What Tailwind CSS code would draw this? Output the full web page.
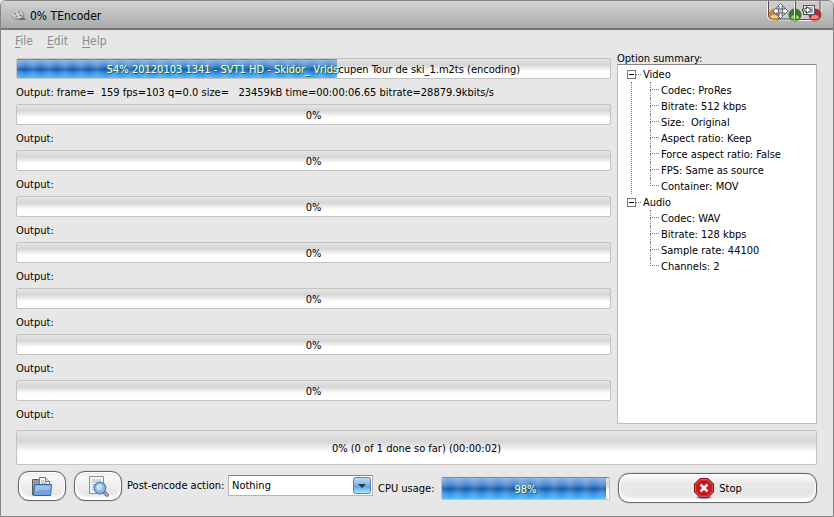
<!DOCTYPE html>
<html lang="en">
<head>
<meta charset="utf-8">
<meta name="viewport" content="width=device-width, initial-scale=1">
<title>0% TEncoder</title>
<script src="https://cdn.jsdelivr.net/npm/@tailwindcss/browser@4"></script>
</head>
<body class="bg-[#e7e7e7] font-['DejaVu_Sans_Condensed','DejaVu_Sans',sans-serif] text-[11px] leading-4 text-black">
<div class="flex min-h-screen flex-col rounded-t-md border border-[#858585] bg-[#e7e7e7]">
  <header class="flex h-[29px] items-start justify-between rounded-t-md border-b-2 border-[#777] bg-linear-to-b from-[#d2d2d2] to-[#aaaaaa] pr-[10px] pl-[10px]">
    <div class="flex items-center gap-[3px] pt-[7px]">
      <svg class="h-4 w-4" viewBox="0 0 16 16"><ellipse cx="7" cy="7" rx="6.500" ry="5" fill="#8b8e8a"/><ellipse cx="6.500" cy="6.300" rx="5.500" ry="4" fill="#d2d5d0"/><g fill="#858884"><ellipse cx="4" cy="5.500" rx="1.400" ry=".9"/><ellipse cx="8" cy="4.300" rx="1.500" ry=".9"/><ellipse cx="9.500" cy="7.300" rx="1.500" ry="1"/><ellipse cx="5.500" cy="8.300" rx="1.400" ry=".9"/></g><path d="M8 11l5-2 2 3H8z" fill="#737570"/></svg>
      <h1 class="text-[12px]">0% TEncoder</h1>
    </div>
    <div class="flex h-[22px]">
      <button aria-label="Move window" class="h-[22px] w-7"><svg viewBox="0 0 28 22" class="h-[22px] w-7">
        <path d="M.5 0v15q0 4 4 4H28" fill="#cfcbc8" stroke="#f6eeee"/><circle cx="8" cy="14" r="6.500" fill="#c48a45"/><ellipse cx="7" cy="17" rx="4" ry="3" fill="#ffd16c"/><circle cx="28" cy="14" r="6.500" fill="#3c7829"/><ellipse cx="28" cy="17" rx="4" ry="3" fill="#8ad65f"/>
        <path d="M1.500 0v14q0 4 4 4H28" fill="none" stroke="#5a5050"/><path d="M13.500 2.500l3 3h-1.500v2.500h2.500V6.500l3.500 3.500-3.500 3.500V12H15v2.500h1.500l-3 3-3-3H12V12H9.500v1.500L6 10l3.500-3.500V8H12V5.500h-1.500z" fill="#f6f4f6" stroke="#666678"/><path d="M11.500 8h4v4h-4z" fill="#ccc6c2" stroke="#666678"/><path d="M27.500 0v18" stroke="#eee"/></svg></button>
      <button aria-label="Roll up window" class="h-[22px] w-7"><svg viewBox="0 0 28 22" class="h-[22px] w-7">
        <path d="M0 19.500h22q4 0 4-4V0H0" fill="#cfc8c8" stroke="#f6eeee"/><circle cx="0" cy="14" r="6.500" fill="#3c7829"/><ellipse cx="0" cy="17" rx="4" ry="3" fill="#8ad65f"/><circle cx="20" cy="14" r="6.500" fill="#b52c31"/><ellipse cx="20" cy="17" rx="4" ry="3" fill="#f58585"/>
        <path d="M0 18.500h21q4 0 4-4V0" fill="none" stroke="#5a5050"/><path d="M9.500 5.500h9v7h-9z" fill="none" stroke="#555568" stroke-width="3"/><path d="M9.500 5.500h9v7h-9z" fill="#aaa" stroke="#fff"/><path d="M7.500 8h4V5.500l4.500 3.500-4.500 3.500V10h-4z" fill="#fff" stroke="#444450"/><path d="M.5 0v18" stroke="#555544"/></svg></button>
    </div>
  </header>

  <nav class="flex h-[22px] items-center gap-[14px] pl-[14px] text-[12px] text-[#8c8c8c]">
    <button><u class="underline-offset-2">F</u>ile</button>
    <button><u class="underline-offset-2">E</u>dit</button>
    <button><u class="underline-offset-2">H</u>elp</button>
  </nav>

  <main class="flex flex-col pr-4 pl-[15px]">
    <div class="flex gap-[6px]">
      <section class="min-w-0 flex-1 pt-[6px]" aria-label="Jobs">
        <div role="progressbar" aria-valuenow="54" class="relative h-[21px] rounded-xs border border-[#c3c3c3] bg-linear-to-b from-[#e6e6e6] via-[#d6d6d6] via-30% to-white to-65%">
          <div class="absolute inset-y-0 left-0 border-t border-[#6e8fb5] bg-[repeating-linear-gradient(90deg,#ffffff28_0px,#ffffff00_8px,#ffffff28_16px),linear-gradient(#86b1df,#4d8bd0_30%,#1557a9_52%,#2f8ce0_72%,#48b8ff)]" style="width:54%"></div>
          <p class="relative pt-[3px] text-center whitespace-pre"><span class="text-white [text-shadow:1px_1px_0_#107a20]">54% 20120103 1341 - SVT1 HD - Skidor_ Vrlds</span>cupen Tour de ski_1.m2ts (encoding)</p>
        </div>
        <p class="h-[25px] pt-[6px] whitespace-pre">Output: frame=  159 fps=103 q=0.0 size=   23459kB time=00:00:06.65 bitrate=28879.9kbits/s</p>
        <div role="progressbar" aria-valuenow="0" class="h-[21px] rounded-xs border border-[#c3c3c3] bg-linear-to-b from-[#e6e6e6] via-[#d6d6d6] via-30% to-white to-65% pt-[3px] text-center">0%</div>
        <p class="h-[25px] pt-[6px]">Output:</p>
        <div role="progressbar" aria-valuenow="0" class="h-[21px] rounded-xs border border-[#c3c3c3] bg-linear-to-b from-[#e6e6e6] via-[#d6d6d6] via-30% to-white to-65% pt-[3px] text-center">0%</div>
        <p class="h-[25px] pt-[6px]">Output:</p>
        <div role="progressbar" aria-valuenow="0" class="h-[21px] rounded-xs border border-[#c3c3c3] bg-linear-to-b from-[#e6e6e6] via-[#d6d6d6] via-30% to-white to-65% pt-[3px] text-center">0%</div>
        <p class="h-[25px] pt-[6px]">Output:</p>
        <div role="progressbar" aria-valuenow="0" class="h-[21px] rounded-xs border border-[#c3c3c3] bg-linear-to-b from-[#e6e6e6] via-[#d6d6d6] via-30% to-white to-65% pt-[3px] text-center">0%</div>
        <p class="h-[25px] pt-[6px]">Output:</p>
        <div role="progressbar" aria-valuenow="0" class="h-[21px] rounded-xs border border-[#c3c3c3] bg-linear-to-b from-[#e6e6e6] via-[#d6d6d6] via-30% to-white to-65% pt-[3px] text-center">0%</div>
        <p class="h-[25px] pt-[6px]">Output:</p>
        <div role="progressbar" aria-valuenow="0" class="h-[21px] rounded-xs border border-[#c3c3c3] bg-linear-to-b from-[#e6e6e6] via-[#d6d6d6] via-30% to-white to-65% pt-[3px] text-center">0%</div>
        <p class="h-[25px] pt-[6px]">Output:</p>
        <div role="progressbar" aria-valuenow="0" class="h-[21px] rounded-xs border border-[#c3c3c3] bg-linear-to-b from-[#e6e6e6] via-[#d6d6d6] via-30% to-white to-65% pt-[3px] text-center">0%</div>
        <p class="h-[25px] pt-[6px]">Output:</p>
      </section>

      <section class="flex w-[200px] flex-col pb-[2px]">
        <h2 id="summary" class="-mt-[2px] h-[14px] leading-[18px]">Option summary:</h2>
        <ul aria-labelledby="summary" role="tree" class="flex-1 border border-[#bdbdbd] border-t-[#858585] bg-white pt-[1px] pl-[9px] leading-[18px]">
          <li>
            <div class="flex h-4 items-start"><span class="flex h-[9px] w-[9px] items-center justify-center self-center border border-[#777]"><span class="h-px w-[5px] bg-black"></span></span><span class="mr-[2px] w-[5px] self-center border-t border-dotted border-[#808080]"></span>Video</div>
            <ul class="ml-1 border-l border-dotted border-[#808080] pl-[18px]">
              <li class="flex h-4 items-start gap-[2px]"><span class="h-4 w-[9px]"><span class="block h-2 border-b border-l border-dotted border-[#808080]"></span><span class="block h-2 border-l border-dotted border-[#808080]"></span></span>Codec: ProRes</li>
              <li class="flex h-4 items-start gap-[2px]"><span class="h-4 w-[9px]"><span class="block h-2 border-b border-l border-dotted border-[#808080]"></span><span class="block h-2 border-l border-dotted border-[#808080]"></span></span>Bitrate: 512 kbps</li>
              <li class="flex h-4 items-start gap-[2px] whitespace-pre"><span class="h-4 w-[9px]"><span class="block h-2 border-b border-l border-dotted border-[#808080]"></span><span class="block h-2 border-l border-dotted border-[#808080]"></span></span>Size:  Original</li>
              <li class="flex h-4 items-start gap-[2px]"><span class="h-4 w-[9px]"><span class="block h-2 border-b border-l border-dotted border-[#808080]"></span><span class="block h-2 border-l border-dotted border-[#808080]"></span></span>Aspect ratio: Keep</li>
              <li class="flex h-4 items-start gap-[2px]"><span class="h-4 w-[9px]"><span class="block h-2 border-b border-l border-dotted border-[#808080]"></span><span class="block h-2 border-l border-dotted border-[#808080]"></span></span>Force aspect ratio: False</li>
              <li class="flex h-4 items-start gap-[2px]"><span class="h-4 w-[9px]"><span class="block h-2 border-b border-l border-dotted border-[#808080]"></span><span class="block h-2 border-l border-dotted border-[#808080]"></span></span>FPS: Same as source</li>
              <li class="flex h-4 items-start gap-[2px]"><span class="h-4 w-[9px]"><span class="block h-2 border-b border-l border-dotted border-[#808080]"></span></span>Container: MOV</li>
            </ul>
          </li>
          <li>
            <div class="flex h-4 items-start"><span class="flex h-[9px] w-[9px] items-center justify-center self-center border border-[#777]"><span class="h-px w-[5px] bg-black"></span></span><span class="mr-[2px] w-[5px] self-center border-t border-dotted border-[#808080]"></span>Audio</div>
            <ul class="ml-[5px] pl-[18px]">
              <li class="flex h-4 items-start gap-[2px]"><span class="h-4 w-[9px]"><span class="block h-2 border-b border-l border-dotted border-[#808080]"></span><span class="block h-2 border-l border-dotted border-[#808080]"></span></span>Codec: WAV</li>
              <li class="flex h-4 items-start gap-[2px]"><span class="h-4 w-[9px]"><span class="block h-2 border-b border-l border-dotted border-[#808080]"></span><span class="block h-2 border-l border-dotted border-[#808080]"></span></span>Bitrate: 128 kbps</li>
              <li class="flex h-4 items-start gap-[2px]"><span class="h-4 w-[9px]"><span class="block h-2 border-b border-l border-dotted border-[#808080]"></span><span class="block h-2 border-l border-dotted border-[#808080]"></span></span>Sample rate: 44100</li>
              <li class="flex h-4 items-start gap-[2px]"><span class="h-4 w-[9px]"><span class="block h-2 border-b border-l border-dotted border-[#808080]"></span></span>Channels: 2</li>
            </ul>
          </li>
        </ul>
      </section>
    </div>

    <div role="progressbar" aria-valuenow="0" class="mt-1 flex h-[35px] items-start justify-center rounded-xs border border-[#c3c3c3] bg-linear-to-b from-[#e6e6e6] via-[#d6d6d6] via-30% to-white to-65% pt-[10px]">0% (0 of 1 done so far) (00:00:02)</div>

    <footer class="mt-[6px] flex items-start pl-[2px]">
      <button aria-label="Open output folder" class="flex h-[30px] w-12 items-center justify-center rounded-[11px] border border-[#666] bg-linear-to-b from-[#ececec] via-[#f8f8f8] via-20% to-[#dedede] shadow-[inset_0_0_0_1px_#fff,inset_0_-4px_3px_#fff,0_0_1px_#777]">
        <svg class="h-[22px] w-[22px]" viewBox="0 0 22 22"><path d="M1.500 20V4.500h6l1 2h10V20z" fill="#9a9a98" stroke="#5c5c5a"/><path d="M8.500 14V2.500h6l4 4V14z" fill="#fafafa" stroke="#777"/><path d="M14.500 2.500v4h4" fill="#ddd" stroke="#777"/><path d="M10 6h3M10 8h6" stroke="#999"/><path d="M3.500 9.500h17l-1 11h-17z" fill="#72a4db" stroke="#2e65a8"/><path d="M4.500 10.500h15l-.3 4Q10 14 4 16z" fill="#a0c2e8"/></svg>
      </button>
      <button aria-label="Preview" class="ml-2 flex h-[30px] w-12 items-center justify-center rounded-[11px] border border-[#666] bg-linear-to-b from-[#ececec] via-[#f8f8f8] via-20% to-[#dedede] shadow-[inset_0_0_0_1px_#fff,inset_0_-4px_3px_#fff,0_0_1px_#777]">
        <svg class="h-[22px] w-[22px]" viewBox="0 0 22 22"><path d="M2.500 1.500h14v17h-14z" fill="#f5f5f3" stroke="#8d8d8a"/><path d="M5 5h9M5 7h8M5 9.500h4M5 12h3M5 14.500h3" stroke="#b5b5b2"/><path d="M17.500 17.500l2.500 2.500" stroke="#666" stroke-width="3.500" stroke-linecap="round"/><path d="M18 18l2 2" stroke="#c8c8c8" stroke-width="1.500" stroke-linecap="round"/><circle cx="13" cy="13" r="5.700" fill="#8fbcec" stroke="#5a89c5" stroke-width="1.500"/><circle cx="12.300" cy="12" r="3" fill="#c8dff7"/></svg>
      </button>
      <label for="post" class="ml-[5px] w-[101px] pt-[7px] whitespace-nowrap">Post-encode action:</label>
      <div class="relative mt-1 w-[145px]">
        <select id="post" class="block h-[21px] w-full appearance-none border border-[#b5b5b5] border-t-[#858585] bg-white pr-6 pl-[3px]"><option>Nothing</option></select>
        <svg class="pointer-events-none absolute top-[2px] right-[2px] h-[17px] w-[18px]" viewBox="0 0 18 17"><defs><linearGradient id="b" x2="0" y2="1"><stop stop-color="#c3dbf4"/><stop offset=".48" stop-color="#84b4e8"/><stop offset=".55" stop-color="#5ba1e6"/><stop offset="1" stop-color="#aaf4ff"/></linearGradient></defs><rect x=".5" y=".5" width="17" height="16" rx="2" fill="url(#b)" stroke="#5486b8"/><path d="M5 7h8l-4 4z" fill="#253b52"/></svg>
      </div>
      <span class="ml-[5px] w-[63px] pt-[10px] whitespace-nowrap">CPU usage:</span>
      <div role="progressbar" aria-valuenow="98" aria-label="CPU usage" class="relative mt-[6px] h-[23px] flex-1 rounded-xs border border-[#c3c3c3] border-t-[#858585] bg-linear-to-b from-[#e6e6e6] via-[#d6d6d6] via-30% to-white to-65%">
        <div class="absolute inset-y-0 left-0 bg-[repeating-linear-gradient(90deg,#ffffff28_0px,#ffffff00_8px,#ffffff28_16px),linear-gradient(#86b1df,#4d8bd0_30%,#1557a9_52%,#2f8ce0_72%,#48b8ff)]" style="width:98%"></div>
        <p class="relative pt-1 text-center text-white [text-shadow:1px_1px_0_#107a20]">98%</p>
      </div>
      <button class="mt-[2px] ml-2 flex h-[30px] w-[199px] items-center justify-center gap-1 rounded-[11px] border border-[#666] bg-linear-to-b from-white via-[#e8e8e8] via-35% to-[#e6e6e6] leading-[18px] shadow-[inset_0_0_0_1px_#fff,inset_0_-4px_3px_#fff,0_0_1px_#777]">
        <svg class="h-[22px] w-[22px]" viewBox="0 0 22 22"><ellipse cx="11" cy="20.500" rx="8" ry="1.500" fill="#999"/><path d="M7 1.500h8l5.500 5.500v8L15 20.500H7L1.500 15V7z" fill="#c5161c" stroke="#7d1114"/><path d="M7.500 2.700h7l4.800 4.800v7l-4.800 4.800h-7l-4.800-4.800v-7z" fill="none" stroke="#e06a6a"/><path d="M7.500 7.500l7 7m0-7l-7 7" stroke="#f4eeee" stroke-width="2.500"/></svg>
        <span class="pt-[2px]">Stop</span>
      </button>
    </footer>
  </main>
</div>
</body>
</html>
